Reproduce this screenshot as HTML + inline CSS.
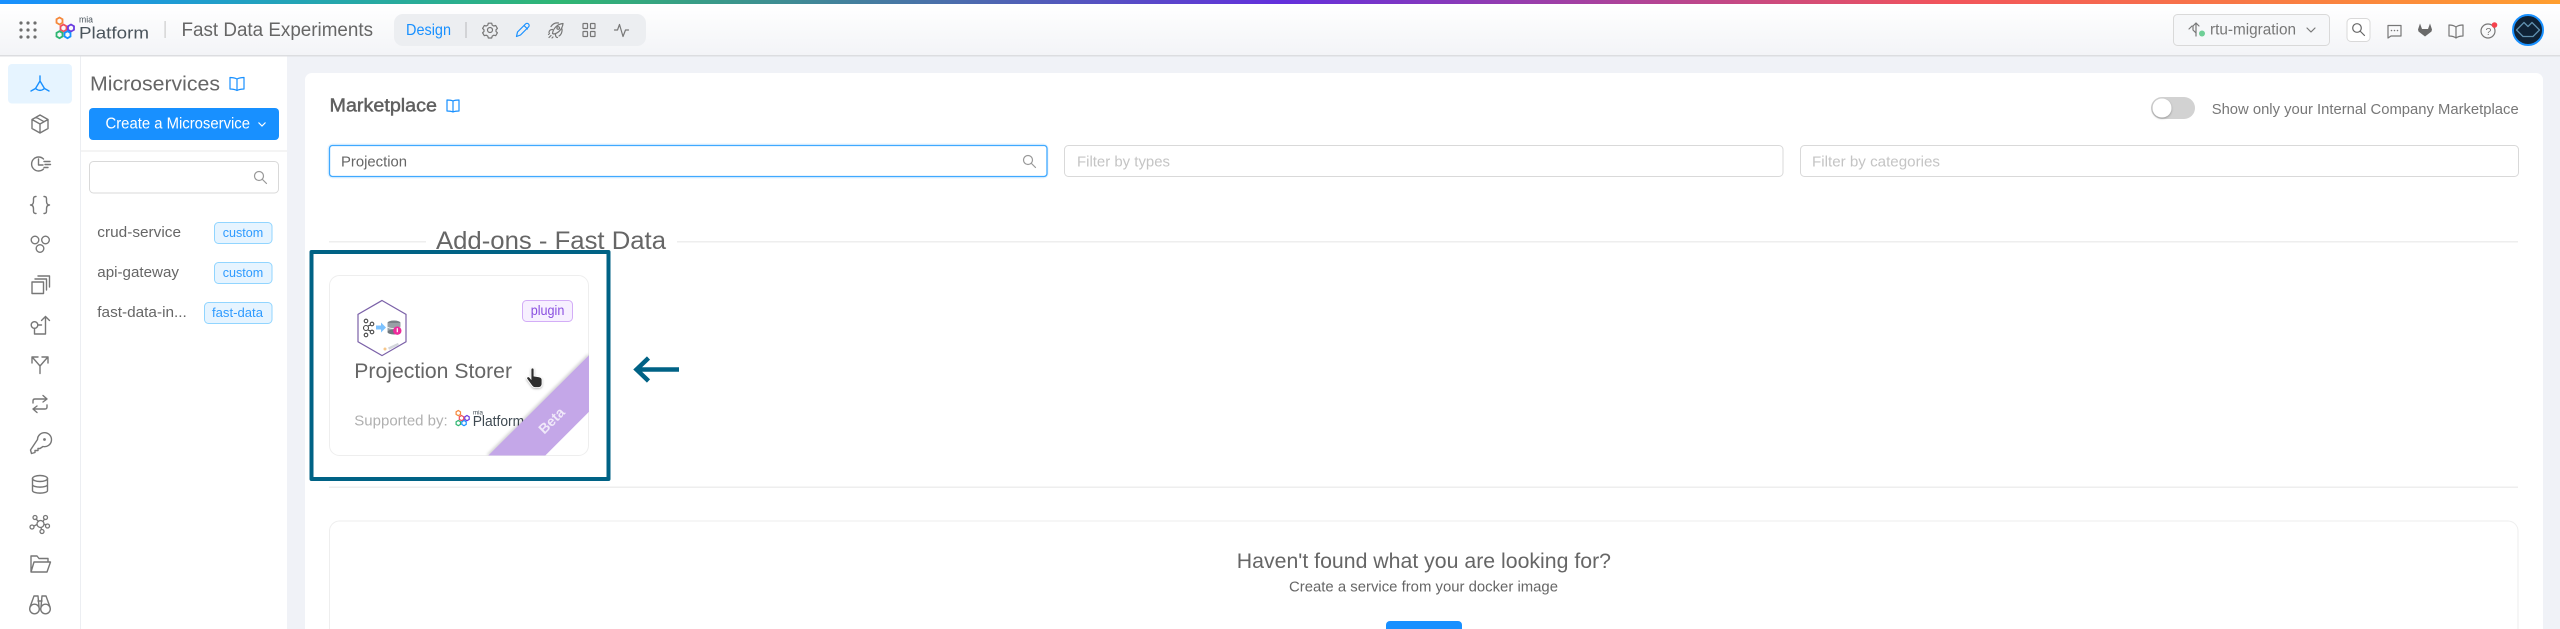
<!DOCTYPE html>
<html lang="en"><head><meta charset="utf-8"><title>Marketplace</title>
<style>
html,body{margin:0;padding:0;width:2560px;height:629px;overflow:hidden;background:#f0f2f7}
svg{display:block}
text{font-family:"Liberation Sans",sans-serif;fill:#666}
.i{fill:none;stroke:#777;stroke-width:1.4;stroke-linecap:round;stroke-linejoin:round}
.h{fill:none;stroke:#777;stroke-width:1.2;stroke-linecap:round;stroke-linejoin:round}
</style></head><body>
<svg width="2560" height="629" viewBox="0 0 2560 629" xmlns="http://www.w3.org/2000/svg">
<defs>
<linearGradient id="top"><stop offset="0" stop-color="#1890ff"/><stop offset=".22" stop-color="#2fb673"/><stop offset=".5" stop-color="#6330dc"/><stop offset=".76" stop-color="#f2545b"/><stop offset="1" stop-color="#ff9f2f"/></linearGradient>
<linearGradient id="hd" x1="0" y1="0" x2="0" y2="1"><stop offset="0" stop-color="#fff"/><stop offset="1" stop-color="#f3f4f7"/></linearGradient>
<filter id="sh" x="-30%" y="-30%" width="160%" height="160%"><feGaussianBlur stdDeviation="1.5"/></filter>
<filter id="sk" x="-50%" y="-50%" width="200%" height="200%"><feDropShadow dx="0" dy="1" stdDeviation="1" flood-color="#000" flood-opacity=".3"/></filter>
<clipPath id="cardclip"><rect x="329" y="275" width="260" height="180.500" rx="10"/></clipPath>
</defs>

<rect width="2560" height="629" fill="#f0f2f7"/>
<!-- header -->
<rect y="4" width="2560" height="51" fill="url(#hd)"/>
<rect y="55" width="2560" height="1.500" fill="#dcdde0"/>
<rect width="2560" height="4" fill="url(#top)"/>
<g fill="#6e6e6e"><circle cx="21" cy="23" r="1.600"/><circle cx="28" cy="23" r="1.600"/><circle cx="35" cy="23" r="1.600"/><circle cx="21" cy="30" r="1.600"/><circle cx="28" cy="30" r="1.600"/><circle cx="35" cy="30" r="1.600"/><circle cx="21" cy="37" r="1.600"/><circle cx="28" cy="37" r="1.600"/><circle cx="35" cy="37" r="1.600"/></g>
<g fill="none" stroke-width="1.800">
<path stroke="#f5883b" d="M59.500 17.500l3 1.750v3.500l-3 1.750-3-1.750v-3.500z"/>
<path stroke="#ef4f5e" d="M63.500 24.500l3 1.750v3.500l-3 1.750-3-1.750v-3.500z"/>
<path stroke="#6a3be0" d="M71 24.500l3 1.750v3.500l-3 1.750-3-1.750v-3.500z"/>
<path stroke="#2fb673" d="M59.500 31.200l3 1.750v3.500l-3 1.750-3-1.750v-3.500z"/>
<path stroke="#1890ff" d="M67.500 31.200l3 1.750v3.500l-3 1.750-3-1.750v-3.500z"/>
</g>
<text x="79" y="22.700" font-size="9.500" textLength="14" lengthAdjust="spacingAndGlyphs" style="fill:#4a545c">mia</text>
<text x="79" y="38.500" font-size="17" textLength="70" lengthAdjust="spacingAndGlyphs" style="fill:#4a545c">Platform</text>
<rect x="164.500" y="21" width="1.200" height="17" fill="#ccc"/>
<text x="181.500" y="36" font-size="19" textLength="191.500" lengthAdjust="spacingAndGlyphs">Fast Data Experiments</text>
<rect x="394" y="14" width="252" height="32" rx="9" fill="#eceef1"/>
<text x="406" y="35" font-size="16" textLength="45" lengthAdjust="spacingAndGlyphs" style="fill:#1890ff">Design</text>
<rect x="465" y="22" width="2" height="16" fill="#d2d3d6"/>
<g class="h" transform="translate(490,30)"><circle r="2.500"/><path d="M-1.700-6.800h3.400l.5 1.900 1.600.9 1.900-.5 1.700 2.900-1.400 1.400v1.600l1.400 1.400-1.700 2.900-1.900-.5-1.600.9-.5 1.900h-3.400l-.5-1.900-1.600-.9-1.900.5-1.700-2.900 1.400-1.400v-1.600l-1.400-1.400 1.700-2.900 1.900.5 1.600-.9z"/></g>
<g class="h" transform="translate(523,30)" style="stroke:#1890ff"><path d="M-6.500 6.500l1-4.500 8-8a2.100 2.100 0 0 1 3 3l-8 8zM1.500-4l3 3"/></g>
<g class="h" transform="translate(556,30)"><path d="M-3.500 3.500C-3-1 1-6 7-6.500 6.500-.5 1.500 3.500-2 4zM-3.500-.5C-6-.5-7 1-7 2.500M-.5 4.500C-.5 6.500 0 7.500 1.500 7.500"/><circle cx="2.200" cy="-2" r="1.300"/><path d="M-5-3.500C-3-6.500 0-7.500 2.500-7M6-1C6.500 2 5 5 3 6M-7 7.500l2-2M-7.500 4.500l1-1M-4 8l1-1"/></g>
<g class="h" transform="translate(589,30)"><rect x="-6" y="-6.500" width="4.500" height="5" rx=".5"/><rect x="1.500" y="-6.500" width="4.500" height="5" rx=".5"/><rect x="-6" y="1.500" width="4.500" height="5" rx=".5"/><rect x="1.500" y="1.500" width="4.500" height="5" rx=".5"/></g>
<path class="h" d="M614.500 30h3l2-5.500 3.500 12 2.500-6.500h3"/>

<rect x="2173.500" y="14.500" width="156" height="31" rx="4" fill="#f6f7f9" stroke="#d9d9d9"/>
<path class="h" d="M2196 36V23M2193 26l3-3 3 3M2196 33l-3-3v-4M2189 29l3-3"/>
<circle cx="2202" cy="33.500" r="3" fill="#6fcf97"/>
<text x="2210" y="34.700" font-size="15.500" textLength="86" lengthAdjust="spacingAndGlyphs" style="fill:#777">rtu-migration</text>
<path class="h" d="M2307 28l4 4 4-4"/>
<rect x="2347" y="18.500" width="23" height="23" rx="4" fill="#fff" stroke="#d9d9d9"/>
<g class="h" style="stroke:#666;stroke-width:1.200"><circle cx="2357" cy="28" r="4.300"/><path d="M2360.500 31.500l4 4"/></g>
<path class="h" d="M2388 25.500h13v10.500h-10l-3 2z"/><g fill="#777"><circle cx="2391.500" cy="30.500" r=".8"/><circle cx="2394.500" cy="30.500" r=".8"/><circle cx="2397.500" cy="30.500" r=".8"/></g>
<path fill="#6a6a6a" d="M2425 36.500l-6.500-5-.5-2 2-6 2 5.500h6l2-5.500 2 6-.5 2z"/>
<path class="h" d="M2456 27c-2-1.500-4.500-2-7-2v11c2.500 0 5 .5 7 2 2-1.500 4.500-2 7-2v-11c-2.500 0-5 .5-7 2zM2456 27v11"/>
<circle class="h" cx="2488" cy="31" r="7"/><text x="2485.500" y="35" font-size="10.500" style="fill:#777">?</text>
<circle cx="2494.500" cy="25" r="2.800" fill="#f5424d"/>
<circle cx="2528" cy="30" r="15" fill="#0f2236" stroke="#1890ff" stroke-width="2"/>
<path d="M2516.500 30l7.500-7.500 4 4 4-4 7.500 7.500-6.500 6.500h-10z" fill="none" stroke="#5f8fae" stroke-width="1.300" stroke-linejoin="round"/>

<!-- sidebar -->
<rect y="56.500" width="80" height="573" fill="#fff"/>
<rect x="80" y="56.500" width="1" height="573" fill="#eceef2"/>
<rect x="81" y="56.500" width="206" height="573" fill="#fff"/>
<rect x="8" y="64" width="64" height="39.500" rx="4" fill="#e6f4ff"/>
<path class="i" style="stroke:#1890ff" d="M40 76v5M35.500 88.500l4.500-7.500 4.500 7.500M31 91l4.500-2.500c3 2.500 6 2.500 9 0l4.500 2.500"/>
<g class="i" transform="translate(40,124)"><path d="M0-9l8 4.500v9L0 9l-8-4.500v-9zM-8-4.500L0 0l8-4.500M0 0v9M-4-6.800l8 4.500"/></g>
<g class="i" transform="translate(40,164)"><path d="M3.500-5A7 7 0 1 0 3.500 5M-1.500-5V1H3M4-2.500H10M5 .5H10.500M4 3.500H8"/></g>
<g class="i" transform="translate(40,205)"><path d="M-4-8.500c-3 0-2.500 2-2.500 4.500 0 2.500-1 4-3 4 2 0 3 1.500 3 4 0 2.500-.5 4.500 2.500 4.500M4-8.500c3 0 2.500 2 2.500 4.500 0 2.500 1 4 3 4-2 0-3 1.500-3 4 0 2.500.5 4.500-2.500 4.500"/></g>
<g class="i"><circle cx="35" cy="240" r="3.800"/><circle cx="45.500" cy="240" r="3.800"/><circle cx="40" cy="248.500" r="3.800"/></g>
<g class="i" transform="translate(40,285)"><rect x="-8" y="-3" width="11.500" height="11.500"/><path d="M-5-6H6.500V5M-2-9H9.500V2"/></g>
<g class="i" transform="translate(40,325)"><circle cx="-5.500" cy="0" r="3.300"/><path d="M-2 0h3.500M5.500 9V-8.500M1.500-4.500l4-4 4 4M5.500 9H-5.500V3.500"/></g>
<g class="i" transform="translate(40,365)"><path d="M0 8.500V1L-7-7M0 1L7-7M-8-2V-8H-2M2-8H8V-2"/></g>
<g class="i" transform="translate(40,404)"><path d="M-7-1V-3Q-7-5-5-5H7M3-8.500L7-5 3-2M7 1V3Q7 5 5 5H-7M-3 2L-7 5-3 8.500"/></g>
<g class="i" transform="translate(40,444)"><path d="M-2.500-4.500A7 7 0 1 1 3 2.500L0 4.500H-2V6.500H-5V8.500L-8.500 9.500-9.500 6Z"/><circle cx="4.500" cy="-4.500" r=".7" fill="#777"/></g>
<g class="i" transform="translate(40,484)"><ellipse cy="-5.500" rx="7.500" ry="3"/><path d="M-7.500-5.500V6.500C-7.500 10 7.500 10 7.500 6.500V-5.500M-7.500 .5C-7.500 4 7.500 4 7.500 .5"/></g>
<g class="i" style="stroke-width:1.300" transform="translate(40,524)"><circle cx=".5" cy="0" r="3.500"/><circle cx="-5" cy="-6.500" r="2"/><circle cx="5.500" cy="-6.500" r="2"/><circle cx="-8" cy="3" r="2"/><circle cx="7.500" cy="2" r="2"/><circle cx="2" cy="7.500" r="2"/><path d="M-1.500-2.500L-4-5M3-2.500L4.500-5M-3 .5L-6 2M4 .5H5.500M1 3.500L1.500 5.500"/></g>
<g class="i" transform="translate(40,564)"><path d="M-9 8V-8H-3L-1-5.500H8V-2M-9 8H7L10.500-2H-6Z"/></g>
<g class="i" transform="translate(40,604)"><circle cx="-5.500" cy="5" r="4.800"/><circle cx="5.500" cy="5" r="4.800"/><path d="M-10 3L-6-8H-2L-1 3M10 3L6-8H2L1 3M-2-3H2"/></g>

<!-- panel -->
<text x="90" y="90.500" font-size="20" textLength="130" lengthAdjust="spacingAndGlyphs">Microservices</text>
<path class="h" style="stroke:#1890ff" d="M237 79c-2-1-4-1.500-7-1.500v11.500c3 0 5 .5 7 1.500 2-1 4-1.500 7-1.500V77.500c-3 0-5 .5-7 1.500zM237 79v11.500"/>
<rect x="89" y="108" width="190" height="32" rx="4" fill="#1890ff"/>
<text x="105.500" y="128.700" font-size="15.500" textLength="144.500" lengthAdjust="spacingAndGlyphs" style="fill:#fff">Create a Microservice</text>
<path d="M258.500 122.500l3.500 3.500 3.500-3.500" fill="none" stroke="#fff" stroke-width="1.200"/>
<rect x="81" y="150.500" width="206" height="1" fill="#eaeaea"/>
<rect x="89.500" y="161.500" width="189" height="31.500" rx="4" fill="#fff" stroke="#d9d9d9"/>
<g class="h" style="stroke:#999"><circle cx="259" cy="176" r="4.500"/><path d="M262.500 179.500l4 4"/></g>
<text x="97.300" y="237" font-size="15" textLength="83.700" lengthAdjust="spacingAndGlyphs">crud-service</text>
<text x="97.300" y="277" font-size="15" textLength="81.700" lengthAdjust="spacingAndGlyphs">api-gateway</text>
<text x="97.300" y="317" font-size="15" textLength="89.500" lengthAdjust="spacingAndGlyphs">fast-data-in...</text>
<g fill="#e6f4ff" stroke="#91d5ff"><rect x="214.500" y="222.500" width="57.500" height="21" rx="4"/><rect x="214.500" y="262.500" width="57.500" height="21" rx="4"/><rect x="204.500" y="302.500" width="67.500" height="21" rx="4"/></g>
<g font-size="13"><text x="222.700" y="237" textLength="40.500" lengthAdjust="spacingAndGlyphs" style="fill:#2f9bff">custom</text><text x="222.700" y="277" textLength="40.500" lengthAdjust="spacingAndGlyphs" style="fill:#2f9bff">custom</text><text x="212" y="317" textLength="51" lengthAdjust="spacingAndGlyphs" style="fill:#2f9bff">fast-data</text></g>

<!-- main card -->
<path d="M305 629V80a7 7 0 0 1 7-7H2536a7 7 0 0 1 7 7V629z" fill="#fff"/>
<text x="329.500" y="111.700" font-size="18" textLength="107.500" lengthAdjust="spacingAndGlyphs" style="fill:#5f5f5f;stroke:#5f5f5f;stroke-width:.45">Marketplace</text>
<path class="h" style="stroke:#1890ff" d="M453 101c-1.500-.8-3-1-6-1v11c3 0 4.500.3 6 1 1.500-.7 3-1 6-1v-11c-3 0-4.500.2-6 1zM453 101v11"/>
<rect x="327.500" y="143.500" width="721" height="35" rx="5" fill="#d9eeff" opacity=".7"/>
<rect x="329.500" y="145.500" width="717.500" height="31" rx="3" fill="#fff" stroke="#40a9ff" stroke-width="1.300"/>
<text x="341" y="166.500" font-size="14.500" textLength="66" lengthAdjust="spacingAndGlyphs">Projection</text>
<g class="h" style="stroke:#999"><circle cx="1028" cy="160" r="4.500"/><path d="M1031.500 163.500l4 4"/></g>
<rect x="1064.500" y="145.500" width="718.500" height="31" rx="4" fill="#fff" stroke="#d9d9d9"/>
<text x="1077" y="166.500" font-size="14.500" textLength="93" lengthAdjust="spacingAndGlyphs" style="fill:#c4c4c4">Filter by types</text>
<rect x="1800.500" y="145.500" width="718" height="31" rx="4" fill="#fff" stroke="#d9d9d9"/>
<text x="1812" y="166.500" font-size="14.500" textLength="128" lengthAdjust="spacingAndGlyphs" style="fill:#c4c4c4">Filter by categories</text>
<rect x="2151" y="97" width="44" height="22" rx="11" fill="#d2d2d2"/>
<circle cx="2162" cy="108" r="9.500" fill="#fff" filter="url(#sk)"/>
<text x="2211.700" y="114" font-size="15" textLength="307" lengthAdjust="spacingAndGlyphs" style="fill:#777">Show only your Internal Company Marketplace</text>

<rect x="329" y="241" width="97" height="1.500" fill="#eee"/>
<rect x="677" y="241" width="1841" height="1.500" fill="#eee"/>
<text x="436" y="249" font-size="25" textLength="230" lengthAdjust="spacingAndGlyphs">Add-ons - Fast Data</text>

<rect x="311.500" y="252" width="297" height="227" fill="#fff" stroke="#006285" stroke-width="4" stroke-linejoin="round"/>
<rect x="329.500" y="275.500" width="259" height="180" rx="10" fill="#fff" stroke="#eeeeee"/>
<path d="M382 300.500l24 13.800v27.500l-24 13.800-24-13.800v-27.500z" fill="#fff" stroke="#7b61a8" stroke-width="1.200"/>
<g fill="none" stroke="#444" stroke-width="1.100"><circle cx="366" cy="321" r="1.800"/><circle cx="366" cy="335" r="1.800"/><circle cx="366" cy="328" r="2.500"/><circle cx="372" cy="324" r="1.800"/><circle cx="372" cy="332" r="1.800"/><path d="M368 326l2.500-1M368 330l2.500 1"/></g>
<path d="M376 325.500h5v-3l5 5-5 5v-3h-5z" fill="#7cc2ff"/>
<ellipse cx="394" cy="323" rx="6.500" ry="2.500" fill="#7a8288"/><rect x="387.500" y="323" width="13" height="9" fill="#98a0a6"/><path d="M387.500 327c2 2 11 2 13 0" fill="none" stroke="#fff" stroke-width=".8"/><ellipse cx="394" cy="332" rx="6.500" ry="2.500" fill="#6f777d"/>
<circle cx="397.300" cy="330.700" r="4.200" fill="#ee2a9b"/>
<rect x="396.700" y="328.200" width="1.200" height="4" fill="#fff"/>
<g><circle cx="385" cy="349" r="1.500" fill="#f5c68b"/><rect x="388" y="347.500" width="11" height="2.500" fill="#d4d7dc" transform="rotate(-25 388 347.500)"/></g>
<rect x="522.500" y="300.500" width="50" height="21" rx="4" fill="#f7f0ff" stroke="#d3adf7"/>
<text x="530.700" y="315" font-size="13.500" textLength="33.700" lengthAdjust="spacingAndGlyphs" style="fill:#8a4fe0">plugin</text>
<text x="354.300" y="378" font-size="21" textLength="157.700" lengthAdjust="spacingAndGlyphs">Projection Storer</text>
<text x="354.300" y="425.700" font-size="15" textLength="93.400" lengthAdjust="spacingAndGlyphs" style="fill:#b0b0b0">Supported by:</text>
<g fill="none" stroke-width="1.200">
<path stroke="#f5883b" d="M458.300 410.500l2.200 1.300v2.600l-2.200 1.300-2.200-1.300v-2.600z"/>
<path stroke="#ef4f5e" d="M461.500 415.500l2.200 1.300v2.600l-2.200 1.300-2.200-1.300v-2.600z"/>
<path stroke="#6a3be0" d="M467 415.500l2.200 1.300v2.600l-2.200 1.300-2.200-1.300v-2.600z"/>
<path stroke="#2fb673" d="M458.300 420.500l2.200 1.300v2.600l-2.200 1.300-2.200-1.300v-2.600z"/>
<path stroke="#1890ff" d="M464 420.500l2.200 1.300v2.600l-2.200 1.300-2.200-1.300v-2.600z"/>
</g>
<text x="473" y="414.500" font-size="6.500" textLength="10" lengthAdjust="spacingAndGlyphs" style="fill:#3f4a52">mia</text>
<text x="472.700" y="426" font-size="15" textLength="51.500" lengthAdjust="spacingAndGlyphs" style="fill:#3f4a52">Platform</text>
<g clip-path="url(#cardclip)">
<path d="M589 355.300L488.300 455.500" stroke="#000" stroke-opacity=".3" stroke-width="2" filter="url(#sh)" fill="none"/>
<polygon points="589,355.300 589,411.700 545.300,455.500 488.300,455.500" fill="#c4a7e8"/>
<text transform="translate(555,424) rotate(-45)" font-size="14" font-weight="bold" text-anchor="middle" style="fill:#fff;fill-opacity:.75">Beta</text>
</g>
<g transform="translate(535,378)" filter="url(#sk)"><path d="M-4-8.500c0-2 3-2 3 0V-2l5 .8c2 .4 3 1.300 3 3V6c0 2-1.500 3.500-3.500 3.500H0c-1.500 0-2.500-.8-3.300-2L-8 1c-1-1.500 1-3 2.500-1.800L-4 1z" fill="#2e2e2e" stroke="#fff" stroke-width=".8"/></g>
<path d="M679 369.500H637M648.500 358l-12 11.500 12 11.500" fill="none" stroke="#006285" stroke-width="4.500" stroke-linejoin="miter"/>
<rect x="329" y="486.500" width="2189" height="1.500" fill="#eee"/>
<path d="M329.500 629V531a10 10 0 0 1 10-10H2508a10 10 0 0 1 10 10V629" fill="#fff" stroke="#eeeeee"/>
<text x="1236.800" y="568" font-size="21.500" textLength="374.200" lengthAdjust="spacingAndGlyphs">Haven't found what you are looking for?</text>
<text x="1289" y="591.700" font-size="15" textLength="269" lengthAdjust="spacingAndGlyphs">Create a service from your docker image</text>
<path d="M1386 629v-4a4 4 0 0 1 4-4h68a4 4 0 0 1 4 4v4z" fill="#1890ff"/>
</svg>
</body></html>
